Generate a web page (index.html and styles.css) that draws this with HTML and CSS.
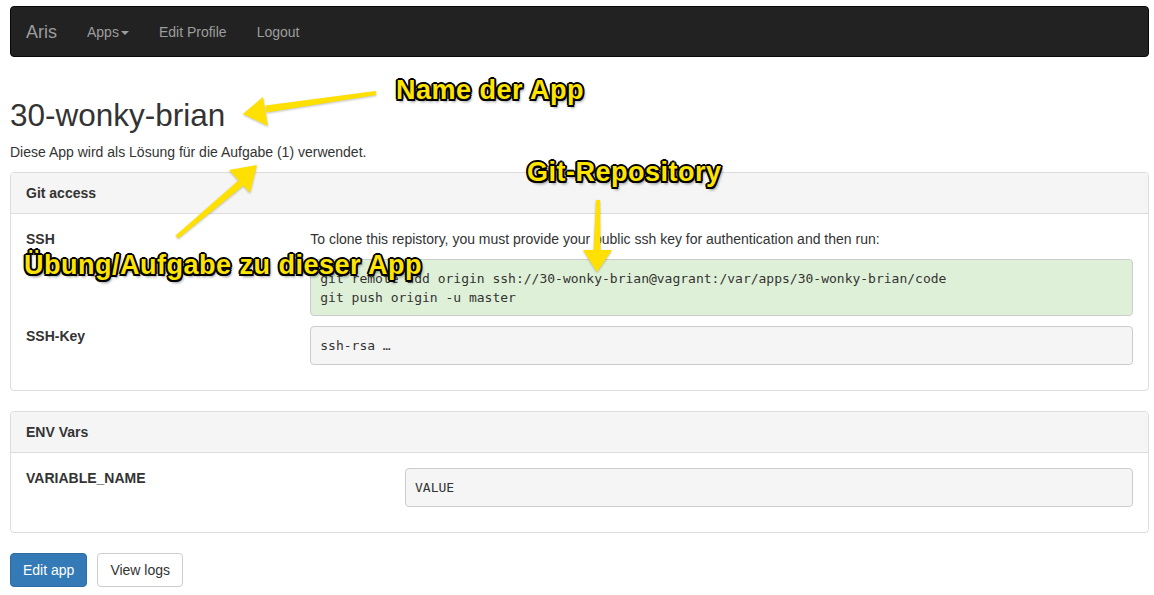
FILE: index.html
```html
<!DOCTYPE html>
<html lang="de">
<head>
<meta charset="utf-8">
<title>30-wonky-brian</title>
<link rel="stylesheet" href="styles.css">
</head>
<body>
<div class="page">
  <nav class="navbar">
    <a class="brand" href="#">Aris</a>
    <a class="nav-link" href="#">Apps<span class="caret"></span></a>
    <a class="nav-link" href="#">Edit Profile</a>
    <a class="nav-link" href="#">Logout</a>
  </nav>

  <h1 class="app-title">30-wonky-brian</h1>
  <p class="app-desc">Diese App wird als Lösung für die Aufgabe (1) verwendet.</p>

  <section class="panel">
    <div class="panel-heading">Git access</div>
    <div class="panel-body">
      <div class="row row-3-9">
        <div class="label">SSH</div>
        <div class="value">
          <p class="hint">To clone this repistory, you must provide your public ssh key for authentication and then run:</p>
          <pre class="code code-green">git remote add origin ssh://30-wonky-brian@vagrant:/var/apps/30-wonky-brian/code
git push origin -u master</pre>
        </div>
      </div>
      <div class="row row-3-9">
        <div class="label">SSH-Key</div>
        <div class="value">
          <pre class="code">ssh-rsa …</pre>
        </div>
      </div>
    </div>
  </section>

  <section class="panel">
    <div class="panel-heading">ENV Vars</div>
    <div class="panel-body">
      <div class="row row-4-8">
        <div class="label">VARIABLE_NAME</div>
        <div class="value">
          <pre class="code">VALUE</pre>
        </div>
      </div>
    </div>
  </section>

  <div class="actions">
    <a class="btn btn-primary" href="#">Edit app</a>
    <a class="btn btn-default" href="#">View logs</a>
  </div>

  <svg class="arrows" width="1154" height="595" viewBox="0 0 1154 595" aria-hidden="true">
    <g fill="#ffe000">
      <polygon points="376.3,95 375.7,91 265.5,105.5 266.5,112.5"/>
      <polygon points="243,114 263,97 268,126"/>
      <polygon points="178.3,238.5 175.7,235.5 238.7,180.3 243.3,185.7"/>
      <polygon points="257,165 229,170 250,193"/>
      <polygon points="596,200 600,200 600.5,251 593.5,251"/>
      <polygon points="597,272 583,250 612,250"/>
    </g>
  </svg>
  <div class="note note-name">Name der App</div>
  <div class="note note-git">Git-Repository</div>
  <div class="note note-task">Übung/Aufgabe zu dieser App</div>
</div>
</body>
</html>
```

FILE: styles.css
```css
* {
  box-sizing: border-box;
}

html, body {
  margin: 0;
  background: #fff;
}

body {
  font-family: "Liberation Sans", Arial, Helvetica, sans-serif;
  font-size: 14px;
  line-height: 20px;
  color: #333;
}

.page {
  position: relative;
  padding: 6px 5px 0 10px;
  min-height: 595px;
}

/* Navbar */
.navbar {
  display: flex;
  align-items: center;
  height: 51px;
  background: #222;
  border: 1px solid #080808;
  border-radius: 4px;
}

.navbar a {
  text-decoration: none;
  color: #9d9d9d;
}

.brand {
  font-size: 18px;
  line-height: 20px;
  padding: 15px 15px;
}

.nav-link {
  font-size: 14px;
  line-height: 20px;
  padding: 15px 15px;
}

.caret {
  display: inline-block;
  width: 0;
  height: 0;
  margin-left: 2px;
  vertical-align: middle;
  border-top: 4px solid #9d9d9d;
  border-left: 4px solid transparent;
  border-right: 4px solid transparent;
}

/* Heading */
.app-title {
  margin: 42px 0 10px;
  font-size: 31.5px;
  line-height: 33px;
  font-weight: 500;
  color: #333;
}

.app-desc {
  margin: 0 0 10px;
}

/* Panels */
.panel {
  border: 1px solid #ddd;
  border-radius: 4px;
  margin-bottom: 20px;
  background: #fff;
}

.panel-heading {
  padding: 10px 15px;
  background: #f5f5f5;
  border-bottom: 1px solid #ddd;
  border-radius: 3px 3px 0 0;
  font-weight: bold;
}

.panel-body {
  padding: 15px 0;
}

.row {
  display: grid;
}

.row-3-9 {
  grid-template-columns: 3fr 9fr;
}

.row-4-8 {
  grid-template-columns: 4fr 8fr;
}

.label,
.value {
  padding: 0 15px;
}

.label {
  font-weight: bold;
}

.hint {
  margin: 0 0 10px;
}

.code {
  margin: 0 0 10px;
  padding: 9px 9px;
  font-family: "DejaVu Sans Mono", Menlo, monospace;
  font-size: 13px;
  line-height: 19px;
  color: #333;
  background: #f5f5f5;
  border: 1px solid #ccc;
  border-radius: 4px;
  white-space: pre;
  overflow: hidden;
}

.code-green {
  background: #dff0d8;
  padding: 8.5px 9px;
}

/* Buttons */
.actions {
  display: flex;
  gap: 10px;
}

.btn {
  display: inline-block;
  padding: 6px 12px;
  font-size: 14px;
  line-height: 20px;
  border: 1px solid transparent;
  border-radius: 4px;
  text-decoration: none;
}

.btn-primary {
  color: #fff;
  background: #337ab7;
  border-color: #2e6da4;
}

.btn-default {
  color: #333;
  background: #fff;
  border-color: #ccc;
}

/* Annotations */
.arrows {
  position: absolute;
  left: 0;
  top: 0;
  pointer-events: none;
  filter: drop-shadow(0 1px 1px rgba(0, 0, 0, 0.25));
}

.note {
  position: absolute;
  font-family: "Liberation Sans", Arial, sans-serif;
  font-weight: bold;
  font-size: 27px;
  line-height: 27px;
  letter-spacing: 0.5px;
  color: #ffe400;
  white-space: nowrap;
  text-shadow:
    2px 0 0 #000, -2px 0 0 #000, 0 2px 0 #000, 0 -2px 0 #000,
    1.5px 1.5px 0 #000, -1.5px 1.5px 0 #000, 1.5px -1.5px 0 #000, -1.5px -1.5px 0 #000,
    2px 3px 3px rgba(0, 0, 0, 0.45);
}

.note-name {
  left: 396px;
  top: 77px;
}

.note-git {
  left: 527px;
  top: 159px;
}

.note-task {
  left: 24px;
  top: 252px;
}
```
